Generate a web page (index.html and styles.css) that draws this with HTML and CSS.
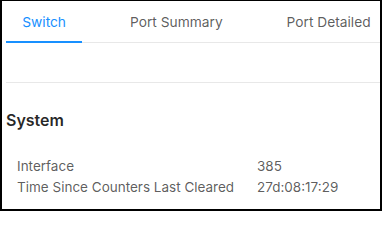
FILE: index.html
```html
<!DOCTYPE html>
<html>
<head>
<meta charset="utf-8">
<link rel="stylesheet" href="styles.css">
</head>
<body>
<div class="frame">
  <div class="tabs">
    <div class="tab active">Switch</div>
    <div class="tab">Port Summary</div>
    <div class="tab">Port Detailed</div>
  </div>
  <div class="toolbar"></div>
  <h2 class="section-title">System</h2>
  <div class="rows">
    <div class="row"><span class="label">Interface</span><span class="value">385</span></div>
    <div class="row"><span class="label">Time Since Counters Last Cleared</span><span class="value">27d:08:17:29</span></div>
  </div>
</div>
</body>
</html>
```

FILE: styles.css
```css
html, body {
  margin: 0;
  padding: 0;
  background: #fff;
}
body {
  font-family: Inter, "Noto Sans", sans-serif;
  color: rgba(0, 0, 0, 0.65);
}
.frame {
  box-sizing: border-box;
  width: 382px;
  height: 211px;
  border-style: solid;
  border-color: #000;
  border-width: 1px 2px 2px 2px;
  padding: 0 0 0 4px;
  overflow: hidden;
}
.tabs {
  display: flex;
  border-bottom: 1px solid #e8e8e8;
  white-space: nowrap;
}
.tab {
  flex: none;
  font-size: 13.75px;
  line-height: 22px;
  padding: 10px 16.25px 8px;
  margin-right: 31.5px;
  color: rgba(0, 0, 0, 0.65);
  border-bottom: 2px solid transparent;
  margin-bottom: -1px;
}
.tab.active {
  color: #1890ff;
  border-bottom-color: #1890ff;
}
.toolbar {
  height: 39px;
  border-bottom: 1px solid #e8e8e8;
}
.section-title {
  margin: 25px 0 0;
  font-size: 16px;
  line-height: 24px;
  font-weight: 600;
  color: rgba(0, 0, 0, 0.85);
}
.rows {
  margin-top: 24px;
  padding-left: 11px;
}
.row {
  display: flex;
  font-size: 13.5px;
  line-height: 21px;
}
.label {
  width: 240px;
  flex: none;
}
.value {
  flex: 1;
}
```
